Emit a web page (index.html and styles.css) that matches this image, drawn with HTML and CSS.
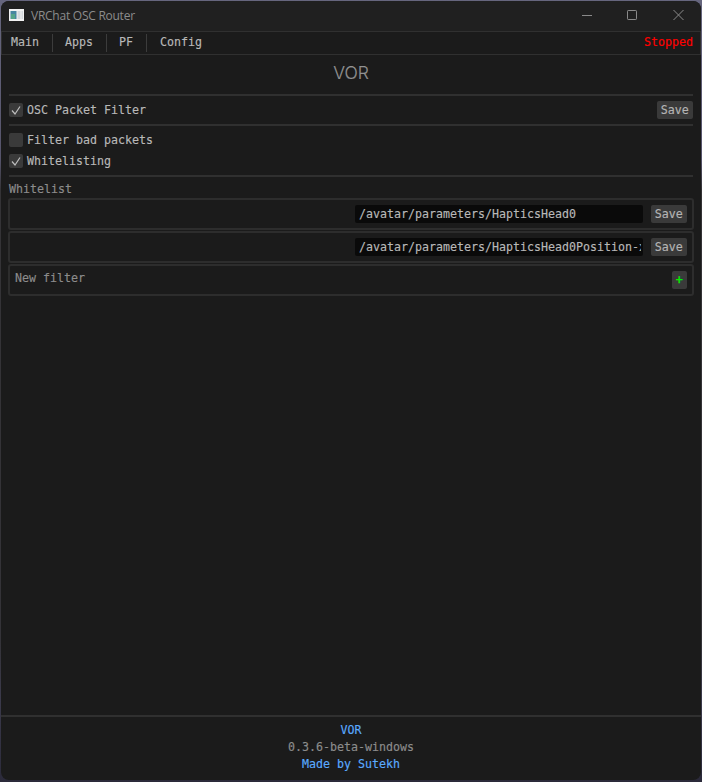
FILE: index.html
```html
<!DOCTYPE html>
<html lang="en">
<head>
<meta charset="utf-8">
<title>VRChat OSC Router</title>
<link rel="stylesheet" href="styles.css">
</head>
<body>
<div class="window">
  <header class="titlebar">
    <svg class="app-icon" width="15" height="12" viewBox="0 0 15 12"><path fill="#f2f2f2" d="M0 0h15v12H0z"/><path fill="#4786a0" d="M1.500 2h6v8h-6z"/><path fill="#55a489" d="M2 5h4v5H2z"/><path fill="#d4d8dc" d="M8.500 2h3v8h-3zM12.500 2h1.500v8h-1.500z"/></svg>
    <span class="caption">VRChat OSC Router</span>
    <svg class="controls" width="104" height="12" viewBox="0 0 104 12" fill="none" stroke="#8a8a8a"><path d="M1 6.500h10"/><rect x="46.500" y="1.500" width="9" height="9" rx=".7"/><path d="M92.500 1l10 10M102.500 1l-10 10"/></svg>
  </header>
  <nav class="menu">
    <span>Main</span><span>Apps</span><span>PF</span><span>Config</span>
    <b class="status">Stopped</b>
  </nav>
  <main>
    <h1>VOR</h1>
    <section class="row packet">
      <span class="check"><svg width="14" height="14" viewBox="0 0 14 14"><path d="M3 7.500l3 3.500 5-7.500"/></svg></span><label>OSC Packet Filter</label>
      <button>Save</button>
    </section>
    <section class="options">
      <div class="row"><span class="check"></span><label>Filter bad packets</label></div>
      <div class="row"><span class="check"><svg width="14" height="14" viewBox="0 0 14 14"><path d="M3 7.500l3 3.500 5-7.500"/></svg></span><label>Whitelisting</label></div>
    </section>
    <section class="whitelist">
      <h2>Whitelist</h2>
      <div class="entry"><div class="field"><span>/avatar/parameters/HapticsHead0</span></div><button>Save</button></div>
      <div class="entry"><div class="field"><span>/avatar/parameters/HapticsHead0Position-x</span></div><button>Save</button></div>
      <div class="entry"><span class="new">New filter</span><button class="add">+</button></div>
    </section>
  </main>
  <footer><a>VOR</a><span>0.3.6-beta-windows</span><a>Made by Sutekh</a></footer>
</div>
</body>
</html>
```
FILE: styles.css
```css
* { box-sizing: border-box; }
body {
  margin: 0;
  height: 782px;
  padding: 1px 1px 2px;
  overflow: hidden;
  background: linear-gradient(#66667e 0, #55536a 160px, #343336 190px, #343338 640px, #3b3a4b 700px, #2b2a3a 100%);
  font: 11.63px/17px "DejaVu Sans Mono", monospace;
  color: #b8b8b8;
  -webkit-text-stroke: .15px currentColor;
}
.window {
  height: 779px;
  display: flex;
  flex-direction: column;
  background: #1b1b1b;
  border-radius: 8px;
  overflow: hidden;
}
.titlebar {
  height: 30px;
  display: flex;
  align-items: center;
  padding: 0 16px 0 8px;
  background: #202020;
  -webkit-text-stroke: 0;
}
.app-icon { margin-bottom: 2px; }
.caption { margin-left: 7px; font: 12px/16px "Open Sans", sans-serif; letter-spacing: -.25px; color: #8c8c8c; }
.controls { margin-left: auto; margin-bottom: 2px; }
.menu {
  height: 24px;
  display: flex;
  align-items: center;
  border: 1px solid #303030;
  padding: 0 7px 0 9px;
  line-height: 18px;
}
.menu span { height: 18px; line-height: 16px; padding-right: 13px; margin-right: 12px; border-right: 1px solid #3c3c3c; }
.menu span:nth-child(3) { margin-right: 13px; }
.menu span:nth-child(4) { border: 0; }
.status { margin-left: auto; height: 18px; line-height: 16px; color: #ff0000; font-weight: 400; -webkit-text-stroke: .15px #ff0000; }
main { flex: 1; padding: 0 8px; }
h1 {
  margin: 0;
  height: 41px;
  border-bottom: 2px solid #303030;
  text-align: center;
  font: 300 17.5px/35px Inter, sans-serif;
  color: #929292;
}
.row { display: flex; align-items: center; height: 21px; }
.check { width: 14px; height: 14px; border-radius: 2px; background: #3a3a3a; margin-right: 4px; }
.options .check { margin-bottom: 1px; }
.check svg { display: block; fill: none; stroke: #bdbdbd; stroke-width: 1.200; }
button {
  width: 36.5px;
  height: 18px;
  padding: 0;
  border: 0;
  border-radius: 2px;
  background: #3a3a3a;
  color: #b4b4b4;
  font: inherit;
}
.packet { height: 30px; border-bottom: 2px solid #303030; }
.packet .check { margin-bottom: 1px; }
.packet button { margin-left: auto; }
.options { height: 51px; padding-top: 4px; border-bottom: 2px solid #303030; }
h2 { margin: 0; height: 21px; font: inherit; line-height: 24px; color: #8c8c8c; }
.entry {
  height: 32px;
  margin: 0 -1px 1px;
  padding: 0 5px;
  border: 2px solid #2d2d2d;
  border-radius: 3px;
  display: flex;
  align-items: center;
  justify-content: flex-end;
  gap: 7.5px;
}
.field { width: 288px; height: 18px; padding: 0 3px 0 4px; border-radius: 2px; background: #0a0a0a; }
.field span { display: block; overflow: hidden; white-space: nowrap; line-height: 18px; margin-right: -.6px; }
.new { margin-right: auto; margin-bottom: 4px; color: #8c8c8c; }
.add { width: 15.5px; color: #00f000; -webkit-text-stroke: .4px #00f000; }
footer {
  height: 65px;
  padding-top: 5px;
  border-top: 2px solid #303030;
  display: flex;
  flex-direction: column;
  align-items: center;
  color: #8c8c8c;
}
footer a { color: #5aaaff; }
```
